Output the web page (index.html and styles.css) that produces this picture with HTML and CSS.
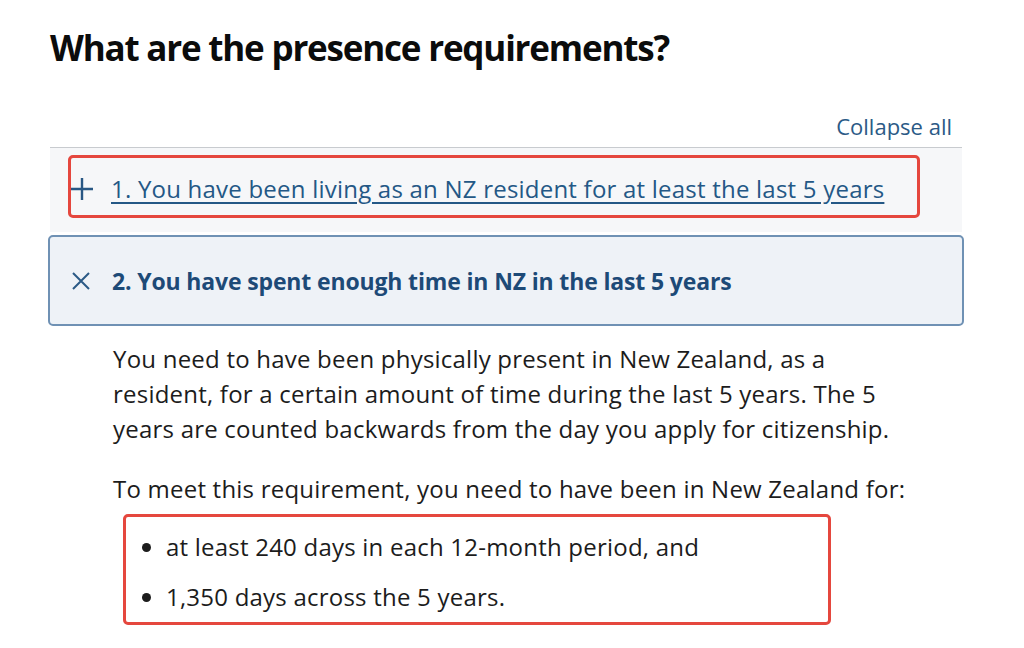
FILE: index.html
```html
<!DOCTYPE html>
<html lang="en">
<head>
<meta charset="utf-8">
<title>What are the presence requirements?</title>
<link rel="stylesheet" href="styles.css">
</head>
<body>
<main class="page">
  <h1 class="title">What are the presence requirements?</h1>
  <div class="accordion">
    <div class="accordion-controls">
      <a class="collapse-all" href="#">Collapse all</a>
    </div>
    <div class="item item-closed">
      <div class="highlight highlight-head">
        <svg class="icon icon-plus" viewBox="0 0 22 22" aria-hidden="true"><path d="M11 0V22M0 11H22"/></svg>
        <a class="item-link" href="#">1. You have been living as an NZ resident for at least the last 5 years</a>
      </div>
    </div>
    <div class="item item-open">
      <div class="item-head">
        <svg class="icon icon-close" viewBox="0 0 18 18" aria-hidden="true"><path d="M1 1L17 17M17 1L1 17"/></svg>
        <span class="item-title">2. You have spent enough time in NZ in the last 5 years</span>
      </div>
    </div>
    <div class="item-body">
      <p class="intro">You need to have been physically present in New Zealand, as a resident, for a certain amount of time during the last 5 years. The 5 years are counted backwards from the day you apply for citizenship.</p>
      <p class="lead">To meet this requirement, you need to have been in New Zealand for:</p>
      <ul class="highlight highlight-list">
        <li>at least 240 days in each 12-month period, and</li>
        <li>1,350 days across the 5 years.</li>
      </ul>
    </div>
  </div>
</main>
</body>
</html>
```
FILE: styles.css
```css
html, body {
  margin: 0;
  padding: 0;
  background: #ffffff;
}
body {
  font-family: "Open Sans", "Noto Sans", sans-serif;
  color: #1c1c1c;
}
.page {
  width: 912px;
  margin-left: 50px;
  padding-top: 24px;
}
.title {
  margin: 0;
  font-size: 35px;
  line-height: 48px;
  font-weight: 700;
  color: #0b0c0c;
  letter-spacing: -1.2px;
}
.accordion {
  margin-top: 39px;
}
.accordion-controls {
  display: flex;
  justify-content: flex-end;
  padding-right: 10px;
  border-bottom: 1px solid #c8cbcf;
  padding-bottom: 6px;
}
.collapse-all {
  font-size: 22px;
  line-height: 30px;
  color: #2b5a86;
  text-decoration: none;
}
.item-closed {
  background: #f6f7f9;
  padding: 7px 42px 14px 18px;
}
.highlight {
  border: 3px solid #e5473e;
  border-radius: 5px;
}
.highlight-head {
  display: flex;
  align-items: center;
  gap: 18px;
  height: 63px;
  padding-top: 4px;
  box-sizing: border-box;
}
.icon {
  flex: none;
  fill: none;
  stroke-linecap: butt;
}
.icon-plus {
  width: 22px;
  height: 22px;
  stroke: #285784;
  stroke-width: 2.4;
}
.item-link {
  font-size: 24px;
  line-height: 30px;
  letter-spacing: 0.22px;
  color: #245886;
  text-decoration: underline;
  text-underline-offset: 4px;
  text-decoration-thickness: 1.5px;
}
.item-open {
  margin: 3px -2px 0;
  border: 2px solid #6f91b4;
  border-radius: 5px;
  background: #eef2f7;
}
.item-head {
  display: flex;
  align-items: center;
  gap: 22px;
  height: 87px;
  padding-left: 22px;
}
.icon-close {
  width: 18px;
  height: 18px;
  stroke: #2b5a86;
  stroke-width: 2;
}
.item-title {
  font-size: 23px;
  line-height: 30px;
  font-weight: 700;
  letter-spacing: -0.15px;
  color: #1d4a77;
}
.item-body {
  padding-left: 63px;
  padding-top: 15px;
  font-size: 24px;
  line-height: 35px;
  letter-spacing: 0.22px;
}
.item-body p {
  margin: 0;
  max-width: 800px;
}
.item-body .intro {
  margin-bottom: 25px;
}
.item-body .lead {
  margin-bottom: 8px;
}
.highlight-list {
  margin: 0 0 0 10px;
  width: 708px;
  box-sizing: border-box;
  padding: 12px 0 8px 40px;
  list-style: disc;
}
.highlight-list li {
  line-height: 35px;
}
.highlight-list li + li {
  margin-top: 15px;
}
```
